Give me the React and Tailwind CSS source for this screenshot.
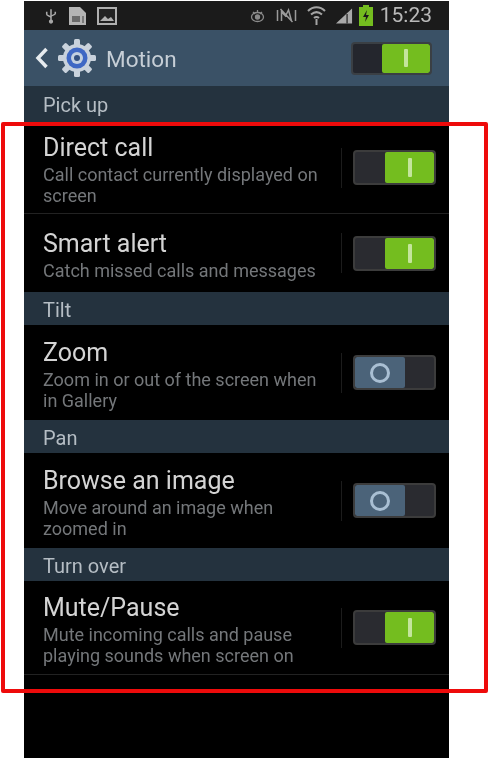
import { Fragment } from 'react';

const sections = [
    {
        title: 'Pick up',
        height: 'h-[36px]',
        rows: [
            { name: 'Direct call', desc: ['Call contact currently displayed on', 'screen'], on: true, height: 'h-[92px]', divider: true },
            { name: 'Smart alert', desc: ['Catch missed calls and messages'], on: true, height: 'h-[78px]' },
        ],
    },
    {
        title: 'Tilt',
        height: 'h-[33px]',
        rows: [{ name: 'Zoom', desc: ['Zoom in or out of the screen when', 'in Gallery'], on: false, height: 'h-[95px]' }],
    },
    {
        title: 'Pan',
        height: 'h-[33px]',
        rows: [{ name: 'Browse an image', desc: ['Move around an image when', 'zoomed in'], on: false, height: 'h-[95px]' }],
    },
    {
        title: 'Turn over',
        height: 'h-[33px]',
        rows: [{ name: 'Mute/Pause', desc: ['Mute incoming calls and pause', 'playing sounds when screen on'], on: true, height: 'h-[94px]', divider: true }],
    },
];

const Toggle = ({ on }) => (
    <div className="flex w-[83px] h-[35px] rounded-[4px] border-2 border-[#3c3c3c] bg-[#2a2b30] overflow-hidden">
        {on ? (
            <>
                <div className="w-[30px]" />
                <div className="flex-1 bg-[#74bd1f] rounded-[2px] flex items-center justify-center">
                    <div className="w-[4px] h-[19px] bg-[#c4e59c] rounded-[1px]" />
                </div>
            </>
        ) : (
            <>
                <div className="w-[50px] bg-[#4b6379] rounded-[2px] flex items-center justify-center">
                    <div className="w-[20px] h-[20px] rounded-full border-[3px] border-[#a9bfd3]" />
                </div>
                <div className="flex-1" />
            </>
        )}
    </div>
);

const StatusBar = () => (
    <div className="h-[29px] bg-[#1b1b1b] flex items-center pl-[21px] pr-[17px] shrink-0">
        {/* usb */}
        <svg width="12" height="18" viewBox="0 0 14 18" fill="none" stroke="#a8a8a8" strokeWidth="1.8">
            <path d="M7 1v16M2 4v3c0 2 5 2 5 4M12 4v2c0 2-5 2-5 4" />
            <circle cx="7" cy="15.500" r="1.600" fill="#a8a8a8" />
        </svg>
        {/* sd card */}
        <svg className="ml-[11px]" width="19" height="20" viewBox="0 0 19 20">
            <path d="M1 1h11l6 6v12H1z" fill="#b4b4b4" />
            <rect x="4" y="10" width="8" height="6" fill="#6a6a6a" />
            <rect x="14" y="10" width="2" height="7" fill="#7a7a7a" />
        </svg>
        {/* picture */}
        <svg className="ml-[10px]" width="20" height="18" viewBox="0 0 20 18">
            <rect x="1" y="1" width="18" height="16" fill="#222" stroke="#b0b0b0" strokeWidth="2" />
            <path d="M3 14l5-5 3 3 3-2 3 4z" fill="#b0b0b0" />
        </svg>
        <div className="ml-auto flex items-center">
            {/* eye */}
            <svg width="15" height="14" viewBox="0 0 15 14" fill="none" stroke="#8a8a8a" strokeWidth="1.300">
                <ellipse cx="7.500" cy="8" rx="6" ry="4.500" />
                <circle cx="7.500" cy="8" r="2" fill="#8a8a8a" />
                <path d="M3 3l2 2M7.500 1v3M12 3l-2 2" />
            </svg>
            {/* mute */}
            <svg className="ml-[10px]" width="23" height="15" viewBox="0 0 20 15" fill="none" stroke="#9a9a9a" strokeWidth="1.500">
                <path d="M1 2v11M19 2v11M5 13V4l4 4 3-6 3 11M4 1l12 13" />
            </svg>
            {/* wifi */}
            <svg className="ml-[9px]" width="19" height="21" viewBox="0 0 19 21" fill="none" stroke="#a4a4a4" strokeWidth="2">
                <path d="M1 6c5-5 12-5 17 0M4 9.500c3.500-3 7.500-3 11 0M7 13c1.500-1.300 3.500-1.300 5 0" />
                <path d="M9.500 14v6" />
            </svg>
            {/* signal */}
            <svg className="ml-[9px]" width="18" height="18" viewBox="0 0 19 18">
                <path d="M1 17L18 1v16z" fill="#a9a9a9" />
                <path d="M12 17V7h1.500v10z" fill="#333" />
            </svg>
            {/* battery */}
            <svg className="ml-[5px]" width="16" height="21" viewBox="0 0 15 21">
                <rect x="4.500" y="0" width="6" height="2" fill="#74bd1f" />
                <rect x="0.500" y="2" width="14" height="19" fill="#74bd1f" />
                <path d="M8.500 5L4.500 12h3l-1 5 4-7h-3z" fill="#1b1b1b" />
            </svg>
            <span className="ml-[6px] text-[21px] leading-none text-[#b9b9b9]">15:23</span>
        </div>
    </div>
);

const ActionBar = () => (
    <div className="h-[56px] bg-[#3a5166] flex items-center pl-[11px] pr-[17px] shrink-0">
        <svg width="14" height="24" viewBox="0 0 14 24" fill="none" stroke="#e6ebef" strokeWidth="3.500">
            <path d="M11.500 3L3 12l8.500 9" />
        </svg>
        <svg className="ml-[9px]" width="38" height="38" viewBox="0 0 38 38">
            <g fill="#c9d2dc">
                <circle cx="19" cy="19" r="14" />
                <rect x="16" y="0" width="6" height="38" rx="1.500" />
                <rect x="16" y="0" width="6" height="38" rx="1.500" transform="rotate(45 19 19)" />
                <rect x="16" y="0" width="6" height="38" rx="1.500" transform="rotate(90 19 19)" />
                <rect x="16" y="0" width="6" height="38" rx="1.500" transform="rotate(135 19 19)" />
            </g>
            <circle cx="19" cy="19" r="10.500" fill="#3f68c4" />
            <circle cx="19" cy="19" r="6" fill="#c3d0e0" />
            <circle cx="19" cy="19" r="3" fill="#33507f" />
        </svg>
        <span className="ml-[10px] pt-[2px] text-[22.500px] leading-none text-[#c6ced6]">Motion</span>
        <div className="ml-auto">
            <div className="flex w-[81px] h-[33px] rounded-[4px] border-2 border-[#3a3f44] bg-[#24262d] overflow-hidden">
                <div className="w-[29px]" />
                <div className="flex-1 bg-[#74bd1f] rounded-[2px] flex items-center justify-center">
                    <div className="w-[4px] h-[18px] bg-[#c4e59c] rounded-[1px]" />
                </div>
            </div>
        </div>
    </div>
);

const App = () => {
    return (
        <div className="relative w-[489px] h-[758px] bg-white overflow-hidden" style={{ fontFamily: '"Roboto", "Liberation Sans", sans-serif' }}>
            <div className="ml-[24px] mt-px w-[425px] h-[757px] bg-black flex flex-col blur-[0.4px]">
                <StatusBar />
                <ActionBar />
                {sections.map((section) => (
                    <Fragment key={section.title}>
                        <div className={`${section.height} bg-[#24323e] flex items-center pl-[19px] pt-[2px] text-[20px] text-[#b5bdc4] shrink-0`}>
                            {section.title}
                        </div>
                        {section.rows.map((row) => (
                            <div key={row.name} className={`${row.height} flex items-center pl-[19px] pr-[13px] shrink-0 ${row.divider ? 'border-b border-[#222]' : ''}`}>
                                <div className="flex-1 min-w-0 pt-[3px]">
                                    <div className="text-[25px] leading-[30px] text-[#d4d4d4]">{row.name}</div>
                                    <div className="mt-[1px]">
                                        {row.desc.map((line) => (
                                            <div key={line} className="text-[18px] leading-[21px] text-[#74777a] whitespace-nowrap">{line}</div>
                                        ))}
                                    </div>
                                </div>
                                <div className="w-px h-[40px] bg-[#1c1c1c] mr-[11px]" />
                                <Toggle on={row.on} />
                            </div>
                        ))}
                    </Fragment>
                ))}
            </div>
            {/* red annotation box */}
            <div className="absolute left-[1px] top-[122px] w-[487px] h-[571px] border-[4px] border-[#ee0b0b] rounded-[2px] pointer-events-none" />
        </div>
    );
};

export default App;
